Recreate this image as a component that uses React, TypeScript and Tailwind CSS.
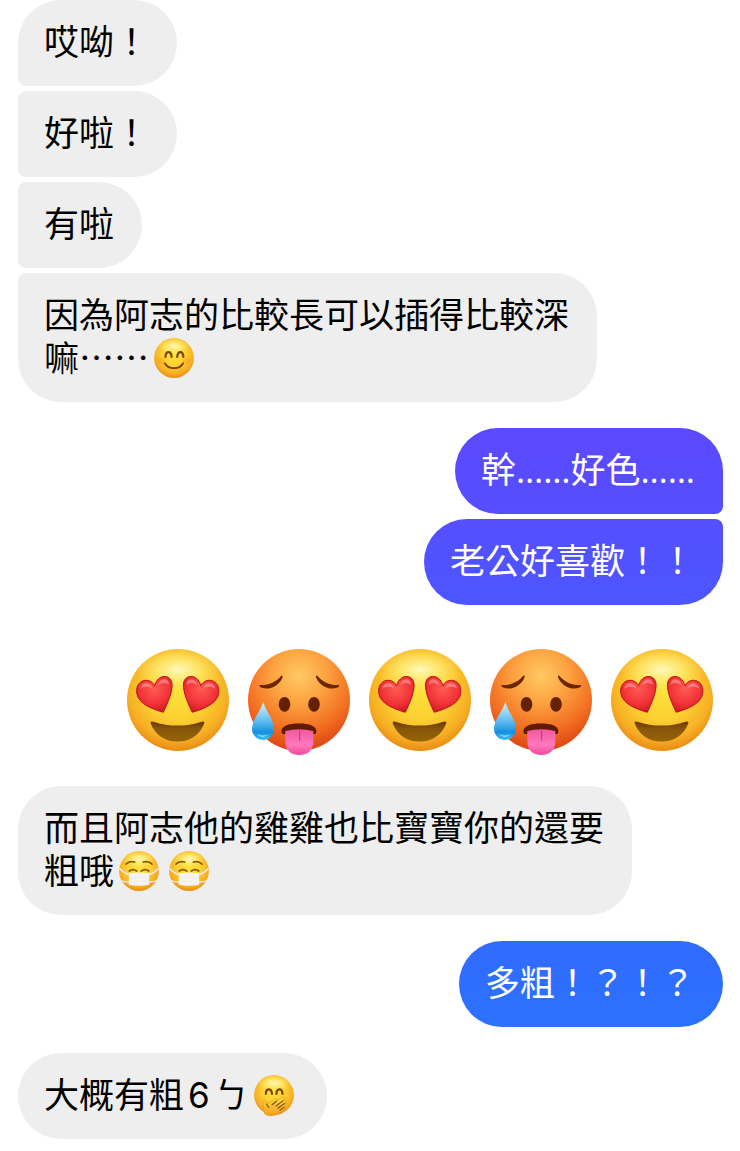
import React from 'react';

type IconProps = {
  className: string;
  viewBox: string;
};

const SMALL = { className: '-my-2 inline-block size-[50px] align-[-4px]', viewBox: '-4 -4 128 128' };
const LARGE = { className: 'h-[129px] w-[121px] shrink', viewBox: '0 -9 121 129' };

// Gradients shared by every emoji on the page
const EmojiDefs: React.FC = () => (
  <svg className="absolute size-0" aria-hidden="true">
    <defs>
      <radialGradient id="face" cx="50%" cy="40%" r="62%">
        <stop offset="0" stopColor="#fde23a" />
        <stop offset="0.45" stopColor="#fcd232" />
        <stop offset="0.78" stopColor="#f7b025" />
        <stop offset="1" stopColor="#e68611" />
      </radialGradient>
      <radialGradient id="shine" cx="50%" cy="45%" r="50%">
        <stop offset="0" stopColor="#fffbd0" stopOpacity="0.9" />
        <stop offset="0.5" stopColor="#fff79a" stopOpacity="0.5" />
        <stop offset="1" stopColor="#fff27a" stopOpacity="0" />
      </radialGradient>
      <radialGradient id="hot" cx="50%" cy="26%" r="74%">
        <stop offset="0" stopColor="#ffc964" />
        <stop offset="0.35" stopColor="#fca441" />
        <stop offset="0.72" stopColor="#f37022" />
        <stop offset="1" stopColor="#dc4512" />
      </radialGradient>
      <radialGradient id="heart" cx="50%" cy="35%" r="70%">
        <stop offset="0" stopColor="#ff5b55" />
        <stop offset="0.6" stopColor="#f23338" />
        <stop offset="1" stopColor="#c5161f" />
      </radialGradient>
      <linearGradient id="mouth" x1="0" y1="0" x2="0" y2="1">
        <stop offset="0" stopColor="#683800" />
        <stop offset="0.35" stopColor="#855509" />
        <stop offset="1" stopColor="#986408" />
      </linearGradient>
      <linearGradient id="drop" x1="0" y1="0" x2="0" y2="1">
        <stop offset="0" stopColor="#d9f2ff" />
        <stop offset="0.5" stopColor="#62bdf0" />
        <stop offset="0.8" stopColor="#158fe0" />
        <stop offset="1" stopColor="#3fc4f6" />
      </linearGradient>
      <linearGradient id="tongue" x1="0" y1="0" x2="0" y2="1">
        <stop offset="0" stopColor="#f0589e" />
        <stop offset="0.6" stopColor="#ff78bd" />
        <stop offset="1" stopColor="#f04b9d" />
      </linearGradient>
      <linearGradient id="hand" x1="0" y1="0" x2="0" y2="1">
        <stop offset="0" stopColor="#ffdc45" />
        <stop offset="1" stopColor="#f0a01f" />
      </linearGradient>
    </defs>
  </svg>
);

const Face: React.FC = () => (
  <>
    <circle cx="60" cy="60" r="51" fill="url(#face)" />
    <ellipse cx="60" cy="32" rx="42" ry="22" fill="url(#shine)" />
  </>
);

const Heart: React.FC = () => (
  <>
    <path
      d="M45.3 72.3C36 69.5 20.5 64.5 18.8 53.5C17.4 44.5 23.5 39.8 29 40.3C33 40.8 35.5 43 36.6 46C37.5 41.5 40.5 37.5 45 36.6C50.8 35.6 55 40 54 47.5C53 56 48.8 65 45.3 72.3Z"
      fill="url(#heart)"
      stroke="#b9141c"
      strokeWidth="1"
      strokeLinejoin="round"
    />
    <path d="M22 49Q23 43 29 43Q33 44 34 48Q27 45 22 49Z" fill="#fff" opacity="0.3" />
    <path d="M40 45Q42 39 47 39Q51 40 51 45Q46 41 40 45Z" fill="#fff" opacity="0.3" />
  </>
);

const HeartEyes: React.FC<IconProps> = (props) => (
  <svg {...props} role="img" aria-label="heart eyes">
    <Face />
    <Heart />
    <g transform="translate(119.5 0) scale(-1 1)">
      <Heart />
    </g>
    <path
      d="M33 84Q31.5 80.5 35.5 81.7Q59.5 89.5 83.5 81.7Q87.5 80.5 86 84C81.5 95.5 72 101.5 59.5 101.5C47 101.5 37.5 95.5 33 84Z"
      fill="url(#mouth)"
    />
  </svg>
);

const HotBrow: React.FC = () => (
  <path d="M20.8 45C29 45.5 37.5 42 42 36Q44.5 34.5 43.3 38C39 47 30 50.5 22 47.5Q19.5 46 20.8 45Z" fill="#6d2605" />
);

const HotFace: React.FC<IconProps> = (props) => (
  <svg {...props} role="img" aria-label="hot face">
    <circle cx="60" cy="60" r="51" fill="url(#hot)" />
    <HotBrow />
    <g transform="translate(120.6 0) scale(-1 1)">
      <HotBrow />
    </g>
    <ellipse cx="45.5" cy="64.3" rx="5.8" ry="7.4" fill="#642103" />
    <ellipse cx="75" cy="64.3" rx="5.8" ry="7.4" fill="#642103" />
    <path d="M42.5 92C41.5 86 50 83.5 60 83.5C70 83.5 78.5 86 77.3 92C77 96 73 93 60 93C47 93 43 96 42.5 92Z" fill="#611b05" />
    <path d="M46.3 91Q60 87.5 74.3 91V101C74.3 110 69 115 60.3 115C51.5 115 46.3 110 46.3 101Z" fill="url(#tongue)" />
    <path d="M60.6 91V100" stroke="#cf3c80" strokeWidth="1.3" strokeLinecap="round" />
    <path d="M24.3 61.7C27 72 35 79 35 89A11 11 0 0 1 13 89C13 79 21.5 72 24.3 61.7Z" fill="url(#drop)" />
    <path d="M18 94Q23 100 30 94Q24 97 18 94Z" fill="#8fe0fb" />
  </svg>
);

const SmilingFace: React.FC<IconProps> = (props) => (
  <svg {...props} role="img" aria-label="smiling face">
    <Face />
    <ellipse cx="27" cy="68" rx="11" ry="8" fill="#f7871f" opacity="0.25" />
    <ellipse cx="93" cy="68" rx="11" ry="8" fill="#f7871f" opacity="0.25" />
    <g fill="none" stroke="#7a4508" strokeWidth="5.5" strokeLinecap="round">
      <path d="M38 57C39 41 53 41 54 57" />
      <path d="M68 57C70 41 83 41 84 57" />
      <path d="M37 74C46 90 74 90 83 74" strokeWidth="5" />
    </g>
  </svg>
);

const MaskFace: React.FC<IconProps> = (props) => (
  <svg {...props} role="img" aria-label="face with medical mask">
    <Face />
    <g fill="none" stroke="#8a5409" strokeWidth="4.5" strokeLinecap="round">
      <path d="M27 42Q35 33 49 37" />
      <path d="M93 42Q85 33 71 37" />
      <path d="M35 60Q44 53 54 60" />
      <path d="M66 60Q76 53 85 60" />
    </g>
    <g fill="none" stroke="#eceaf0" strokeWidth="4">
      <path d="M10 53Q20 65 35 69" />
      <path d="M110 53Q100 65 85 69" />
      <path d="M12 84Q23 89 36 88" />
      <path d="M108 84Q97 89 84 88" />
    </g>
    <path d="M34 66Q60 62 86 66V96Q60 100 34 96Z" fill="#f4f3f6" />
    <path d="M36 77H84M36 86H84" stroke="#e9e8ed" strokeWidth="1.2" />
  </svg>
);

const GigglingFace: React.FC<IconProps> = (props) => (
  <svg {...props} role="img" aria-label="face with hand over mouth">
    <Face />
    <g fill="none" stroke="#7a4508" strokeWidth="5.5" strokeLinecap="round">
      <path d="M39 57C40 42 53 42 55 57" />
      <path d="M66 57C68 42 80 42 82 57" />
    </g>
    <path
      d="M36 108C35 95 30 85 33 77C36 71 39 74 41 84L61 70C66 67 70 70 66 75L80 66C86 63 89 69 84 73L88 73C92 74 92 78 88 81C92 82 91 87 87 90C89 94 84 97 79 101C70 112 48 118 36 108Z"
      fill="url(#hand)"
      stroke="#e08c14"
      strokeWidth="1.5"
    />
    <g fill="none" stroke="#87500a" strokeWidth="3" strokeLinecap="round">
      <path d="M41 84L47 92" />
      <path d="M66 76L55 85" />
      <path d="M83 75L65 88" />
      <path d="M87 82L70 94" />
      <path d="M86 91L75 99" />
    </g>
  </svg>
);

const received = 'max-w-[620px] self-start bg-[#eeeeee] text-black';
const sent = 'self-end text-white';

type BubbleProps = {
  className: string;
  children: React.ReactNode;
};

const Bubble: React.FC<BubbleProps> = ({ className, children }) => (
  <p className={`rounded-[43px] pt-[21px] pr-7 pb-[22px] pl-[26px] ${className}`}>{children}</p>
);

const Dots: React.FC = () => <span className="font-['Open_Sans'] leading-none">……</span>;

const App: React.FC = () => {
  return (
    <main
      lang="zh-Hant"
      className="flex flex-col gap-[26px] bg-white pr-[17px] pl-[18px] font-['Liberation_Sans','Noto_Sans_CJK_TC',sans-serif] text-[35px] leading-[43px]"
    >
      <EmojiDefs />
      <section className="flex flex-col gap-[5px]">
        <Bubble className={`${received} rounded-bl-lg`}>哎呦！</Bubble>
        <Bubble className={`${received} rounded-l-lg`}>好啦！</Bubble>
        <Bubble className={`${received} rounded-l-lg`}>有啦</Bubble>
        <Bubble className={`${received} rounded-tl-lg`}>
          因為阿志的比較長可以插得比較深
          <br />
          嘛⋯⋯
          <SmilingFace {...SMALL} />
        </Bubble>
      </section>
      <section className="flex flex-col gap-[5px]">
        <Bubble className={`${sent} rounded-br-lg bg-linear-to-b from-[#5b49ff] to-[#554eff]`}>
          幹
          <Dots />
          好色
          <Dots />
        </Bubble>
        <Bubble className={`${sent} rounded-tr-lg bg-linear-to-b from-[#544fff] to-[#4c56ff]`}>老公好喜歡！！</Bubble>
      </section>
      <div className="flex justify-end">
        <HeartEyes {...LARGE} />
        <HotFace {...LARGE} />
        <HeartEyes {...LARGE} />
        <HotFace {...LARGE} />
        <HeartEyes {...LARGE} />
      </div>
      <Bubble className={received}>
        而且阿志他的雞雞也比寶寶你的還要
        <br />
        粗哦
        <MaskFace {...SMALL} />
        <MaskFace {...SMALL} />
      </Bubble>
      <Bubble className={`${sent} bg-linear-to-b from-[#316bff] to-[#2c71ff]`}>多粗！？！？</Bubble>
      <Bubble className={received}>
        大概有粗<span className="px-1 font-['Inter'] leading-none">6</span>ㄅ
        <GigglingFace {...SMALL} />
      </Bubble>
    </main>
  );
};

export default App;
